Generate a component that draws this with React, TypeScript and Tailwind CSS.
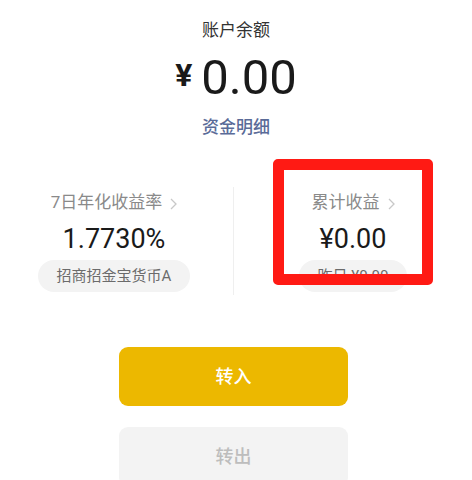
const cjk = { fontFamily: 'Roboto, "Noto Sans CJK SC", sans-serif' }

function Chevron() {
  return (
    <svg width="7" height="12" viewBox="0 0 7 12" className="ml-[8px] mt-[1px]">
      <polyline points="1,1 6,6 1,11" fill="none" stroke="#c8c8c8" strokeWidth="1.3" />
    </svg>
  )
}

function StatColumn({
  label,
  value,
  tag,
}: {
  label: string
  value: string
  tag: string
}) {
  return (
    <div className="flex flex-col items-center">
      <div className="flex items-center h-[24px] text-[17px] text-[#8a8a8a]">
        <span>{label}</span>
        <Chevron />
      </div>
      <div className="mt-[8px] h-[32px] leading-[32px] text-[27px] text-[#1a1a1a]">{value}</div>
      <div className="mt-[5px] h-[32px] px-[19px] rounded-full bg-[#f3f3f3] flex items-center text-[15px] text-[#6b6b6b]">
        {tag}
      </div>
    </div>
  )
}

export default function App() {
  return (
    <div className="relative w-[472px] h-[480px] bg-white overflow-hidden" style={cjk}>
      {/* Balance */}
      <div className="flex flex-col items-center pt-[18px]">
        <div className="h-[24px] leading-[24px] text-[17px] text-[#333333]">账户余额</div>
        <div className="mt-[12px] flex items-start h-[48px]">
          <span className="mt-[4px] text-[32px] leading-[34px] font-bold text-[#1a1a1a]">¥</span>
          <span className="ml-[9px] text-[49px] leading-[48px] text-[#1a1a1a]">0.00</span>
        </div>
        <div className="mt-[13px] h-[24px] leading-[24px] text-[17px] font-medium text-[#5a6b98]">资金明细</div>
      </div>

      {/* Stats */}
      <div className="mt-[48px] grid grid-cols-[233px_1px_1fr] h-[108px]">
        <div className="pt-[4px] pr-[5px]">
          <StatColumn label="7日年化收益率" value="1.7730%" tag="招商招金宝货币A" />
        </div>
        <div className="bg-[#efefef]" />
        <div className="pt-[4px]">
          <StatColumn label="累计收益" value="¥0.00" tag="昨日 ¥0.00" />
        </div>
      </div>

      {/* Actions */}
      <div className="mt-[52px] pr-[5px] flex flex-col items-center gap-[21px]">
        <button className="w-[229px] h-[59px] rounded-[9px] bg-[#ecb800] text-white text-[18px] font-medium">
          转入
        </button>
        <button className="w-[229px] h-[59px] rounded-[9px] bg-[#f3f3f3] text-[#bdbdbd] text-[18px] font-medium">
          转出
        </button>
      </div>

      {/* Annotation highlight */}
      <div className="absolute left-[273px] top-[159px] w-[160px] h-[126px] border-[11px] border-[#ff1a14] rounded-[5px]" />
    </div>
  )
}
